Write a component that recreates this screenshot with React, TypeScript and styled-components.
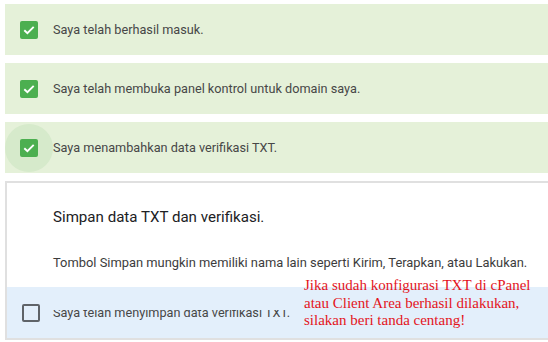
import React from 'react';
import styled, { createGlobalStyle } from 'styled-components';

const GlobalStyle = createGlobalStyle`
  html, body {
    margin: 0;
    padding: 0;
    background: #ffffff;
    overflow: hidden;
  }
  body {
    font-family: Roboto, "Liberation Sans", Arial, sans-serif;
  }
`;

const Page = styled.div`
  width: 548px;
  height: 342px;
  padding: 4px 0 0 5px;
  box-sizing: border-box;
  overflow: hidden;
`;

const List = styled.div`
  width: 560px;
  display: flex;
  flex-direction: column;
  gap: 8px;
`;

const Step = styled.div<{ $tone: 'done' | 'active' }>`
  position: relative;
  height: 51px;
  display: flex;
  align-items: center;
  gap: ${({ $tone }) => ($tone === 'done' ? '15px' : '13px')};
  padding-left: 15px;
  background: ${({ $tone }) => ($tone === 'done' ? '#e5f1d9' : '#e3effb')};
  font-size: 12.7px;
  color: #474747;
`;

const Ripple = styled.span<{ $on?: boolean }>`
  position: relative;
  flex: none;
  display: flex;
  isolation: isolate;

  &::before {
    content: '';
    display: ${({ $on }) => ($on ? 'block' : 'none')};
    position: absolute;
    left: 50%;
    top: 50%;
    width: 48px;
    height: 48px;
    margin: -24px 0 0 -24px;
    border-radius: 50%;
    background: #d6eacb;
    z-index: -1;
  }
`;

const Box = styled.span<{ $checked?: boolean }>`
  flex: none;
  width: 18px;
  height: 18px;
  box-sizing: border-box;
  border-radius: 2px;
  display: flex;
  align-items: center;
  justify-content: center;
  background: ${({ $checked }) => ($checked ? '#4caf50' : 'transparent')};
  border: ${({ $checked }) => ($checked ? 'none' : '2px solid #5f6368')};
`;

const Card = styled.div`
  border: 2px solid #e0e0e0;
  border-right: none;
  background: #ffffff;
`;

const CardBody = styled.div`
  padding: 24px 0 16px 46px;
`;

const Title = styled.div`
  font-size: 15.1px;
  line-height: 20px;
  color: #202124;
  margin-bottom: 27px;
`;

const Desc = styled.div`
  font-size: 12.9px;
  line-height: 17px;
  color: #3c3c3c;
`;

const Cover = styled.div`
  position: absolute;
  left: 45px;
  right: 0;
  top: 0;
  height: 23px;
  background: #e3effb;
`;

const Note = styled.div`
  position: absolute;
  left: 297px;
  top: -10px;
  font-family: "Liberation Serif", "Times New Roman", serif;
  font-size: 15px;
  line-height: 17.5px;
  color: #e3141c;
  white-space: nowrap;
`;

const Check = () => (
  <svg width="12" height="10" viewBox="0 0 12 10" aria-hidden="true">
    <path d="M1.3 5.2 L4.4 8.2 L10.7 1.8" fill="none" stroke="#ffffff" strokeWidth="1.9" />
  </svg>
);

const done = [
  'Saya telah berhasil masuk.',
  'Saya telah membuka panel kontrol untuk domain saya.',
  'Saya menambahkan data verifikasi TXT.',
];

export default function App() {
  return (
    <Page>
      <GlobalStyle />
      <List>
        {done.map((label, i) => (
          <Step key={label} $tone="done">
            <Ripple $on={i === 2}>
              <Box $checked>
                <Check />
              </Box>
            </Ripple>
            <span>{label}</span>
          </Step>
        ))}
        <Card>
          <CardBody>
            <Title>Simpan data TXT dan verifikasi.</Title>
            <Desc>Tombol Simpan mungkin memiliki nama lain seperti Kirim, Terapkan, atau Lakukan.</Desc>
          </CardBody>
          <Step $tone="active">
            <Box />
            <span>Saya telah menyimpan data verifikasi TXT.</span>
            <Cover />
            <Note>
              Jika sudah konfigurasi TXT di cPanel
              <br />
              atau Client Area berhasil dilakukan,
              <br />
              silakan beri tanda centang!
            </Note>
          </Step>
        </Card>
      </List>
    </Page>
  );
}
